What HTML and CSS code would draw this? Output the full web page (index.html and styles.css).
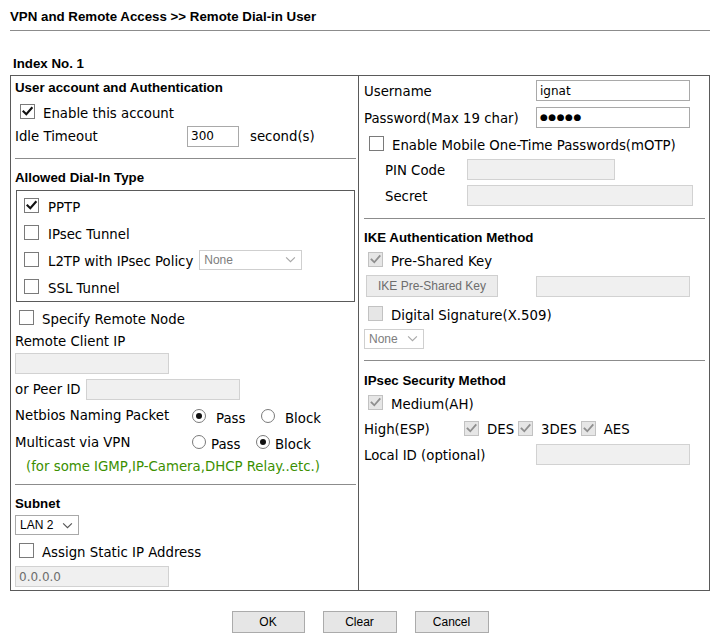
FILE: index.html
```html
<!DOCTYPE html>
<html>
<head>
<meta charset="utf-8">
<link rel="stylesheet" href="styles.css">
</head>
<body>
<div class="page">
  <div class="title">VPN and Remote Access &gt;&gt; Remote Dial-in User</div>
  <div class="rule"></div>
  <div class="index">Index No. 1</div>

  <div class="table">
    <div class="col left">
      <div class="head h22">User account and Authentication</div>
      <div class="row h27"><span class="cb on m5"><svg viewBox="0 0 13 13"><path d="M2.5 6.5l2.8 2.8 5.4-6.3"/></svg></span><span class="cbl">Enable this account</span></div>
      <div class="row h22"><span class="lab w172">Idle Timeout</span><span class="inp w52">300</span><span class="after">second(s)</span></div>
      <div class="sep s21"></div>
      <div class="head h18">Allowed Dial-In Type</div>
      <div class="dialbox">
        <div class="row h27"><span class="cb on m7"><svg viewBox="0 0 13 13"><path d="M2.5 6.5l2.8 2.8 5.4-6.3"/></svg></span><span class="cbl g9">PPTP</span></div>
        <div class="row h27"><span class="cb m7"></span><span class="cbl g9">IPsec Tunnel</span></div>
        <div class="row h27"><span class="cb m7"></span><span class="cbl g9">L2TP with IPsec Policy</span><span class="sel dis w103"><span>None</span><svg class="chev" viewBox="0 0 12 8"><path d="M1 1.5l5 5 5-5"/></svg></span></div>
        <div class="row h27"><span class="cb m7"></span><span class="cbl g9">SSL Tunnel</span></div>
      </div>
      <div class="row h30"><span class="cb m4"></span><span class="cbl">Specify Remote Node</span></div>
      <div class="row h18"><span class="lab">Remote Client IP</span></div>
      <div class="row h27 top3"><span class="inp dis w154"></span></div>
      <div class="row h25"><span class="lab w71">or Peer ID</span><span class="inp dis w154"></span></div>
      <div class="row h27"><span class="lab w177">Netbios Naming Packet</span><span class="pair w69"><span class="rd on"></span><span class="rl g10 low">Pass</span></span><span class="pair"><span class="rd"></span><span class="rl g10 low">Block</span></span></div>
      <div class="row h26"><span class="lab w177">Multicast via VPN</span><span class="pair w64"><span class="rd"></span><span class="rl g5 low">Pass</span></span><span class="pair"><span class="rd on"></span><span class="rl g5 low">Block</span></span></div>
      <div class="row h22"><span class="note">(for some IGMP,IP-Camera,DHCP Relay..etc.)</span></div>
      <div class="sep s16"></div>
      <div class="head h20">Subnet</div>
      <div class="row h24"><span class="sel w64"><span>LAN 2</span><svg class="chev dark" viewBox="0 0 12 8"><path d="M1 1.5l5 5 5-5"/></svg></span></div>
      <div class="row h27"><span class="cb m4"></span><span class="cbl">Assign Static IP Address</span></div>
      <div class="row h25"><span class="inp dis w154 grey">0.0.0.0</span></div>
    </div>

    <div class="col right">
      <div class="row h27"><span class="lab w172 lo">Username</span><span class="inp w154">ignat</span></div>
      <div class="row h26"><span class="lab w172 lo">Password(Max 19 char)</span><span class="inp w154 dots">●●●●●</span></div>
      <div class="row h26"><span class="cb m5"></span><span class="cbl">Enable Mobile One-Time Passwords(mOTP)</span></div>
      <div class="row h27"><span class="lab w82 m21 lo">PIN Code</span><span class="inp dis w148"></span></div>
      <div class="row h24"><span class="lab w82 m21 lo">Secret</span><span class="inp dis w226"></span></div>
      <div class="sep s21"></div>
      <div class="head h18">IKE Authentication Method</div>
      <div class="row h26"><span class="cb on dis m4"><svg viewBox="0 0 13 13"><path d="M2.5 6.5l2.8 2.8 5.4-6.3"/></svg></span><span class="cbl">Pre-Shared Key</span></div>
      <div class="row h28"><span class="btn dis w132 m2">IKE Pre-Shared Key</span><span class="inp dis w154 g38"></span></div>
      <div class="row h26"><span class="cb dis m4"></span><span class="cbl">Digital Signature(X.509)</span></div>
      <div class="row h25"><span class="sel dis w60"><span>None</span><svg class="chev" viewBox="0 0 12 8"><path d="M1 1.5l5 5 5-5"/></svg></span></div>
      <div class="sep s20"></div>
      <div class="head h18">IPsec Security Method</div>
      <div class="row h26"><span class="cb on dis m4"><svg viewBox="0 0 13 13"><path d="M2.5 6.5l2.8 2.8 5.4-6.3"/></svg></span><span class="cbl">Medium(AH)</span></div>
      <div class="row h26"><span class="lab w100 lo">High(ESP)</span><span class="cb on dis"><svg viewBox="0 0 13 13"><path d="M2.5 6.5l2.8 2.8 5.4-6.3"/></svg></span><span class="opt">DES</span><span class="cb on dis"><svg viewBox="0 0 13 13"><path d="M2.5 6.5l2.8 2.8 5.4-6.3"/></svg></span><span class="opt">3DES</span><span class="cb on dis"><svg viewBox="0 0 13 13"><path d="M2.5 6.5l2.8 2.8 5.4-6.3"/></svg></span><span class="opt">AES</span></div>
      <div class="row h27"><span class="lab w172 lo">Local ID (optional)</span><span class="inp dis w154"></span></div>
    </div>
  </div>

  <div class="buttons">
    <span class="btn w73">OK</span>
    <span class="btn w74">Clear</span>
    <span class="btn w74">Cancel</span>
  </div>
</div>
</body>
</html>
```

FILE: styles.css
```css
html, body { margin: 0; padding: 0; background: #fff; }
body {
  font-family: "DejaVu Sans", Verdana, sans-serif;
  font-size: 13.3px;
  color: #000;
}
.page { padding-left: 10px; width: 700px; }

.title {
  font-family: "Liberation Sans", Arial, sans-serif;
  font-weight: bold;
  font-size: 13.3px;
  line-height: 16px;
  padding-top: 9px;
}
.rule { margin-top: 5px; height: 1px; background: #8c8c8c; }
.index {
  font-family: "Liberation Sans", Arial, sans-serif;
  font-weight: bold;
  font-size: 13.3px;
  line-height: 16px;
  margin-top: 25px;
  margin-bottom: 3px;
  padding-left: 3px;
}

.table {
  display: flex;
  border: 1px solid #5a5a5a;
  width: 698px;
}
.col { display: flex; flex-direction: column; }
.left {
  width: 341px;
  padding: 0 2px 1px 4px;
  border-right: 1px solid #5a5a5a;
}
.right {
  width: 345px;
  padding: 1px 0 0 5px;
}

.head {
  font-family: "Liberation Sans", Arial, sans-serif;
  font-weight: bold;
  font-size: 13.3px;
  display: flex;
  align-items: center;
}
.row { display: flex; align-items: center; white-space: nowrap; }
.top3 { align-items: flex-start; padding-top: 3px; box-sizing: border-box; }

.h18 { height: 18px; } .h20 { height: 20px; } .h22 { height: 22px; }
.h24 { height: 24px; } .h25 { height: 25px; } .h26 { height: 26px; }
.h27 { height: 27px; } .h28 { height: 28px; } .h30 { height: 30px; }

.sep { border-top: 1px solid #8c8c8c; box-sizing: border-box; }
.s21 { margin-top: 11px; height: 10px; }
.s20 { margin-top: 9px; height: 11px; }
.s16 { margin-top: 7px; height: 9px; }
.right .sep { margin-right: 4px; }

.lab { display: inline-block; }
.lo { padding-top: 2px; }
.w71 { width: 71px; } .w82 { width: 82px; } .w100 { width: 100px; }
.w172 { width: 172px; } .w177 { width: 177px; }
.m2 { margin-left: 2px; } .m4 { margin-left: 4px; } .m5 { margin-left: 5px; }
.m7 { margin-left: 7px; } .m21 { margin-left: 21px; }

/* checkboxes */
.cb {
  display: inline-flex;
  width: 13px; height: 13px;
  border: 1px solid #7a7a7a;
  background: #fff;
  flex: none;
}
.cb svg { width: 13px; height: 13px; }
.cb path { fill: none; stroke: #111; stroke-width: 2.1; stroke-linecap: square; }
.cb.dis { border-color: #c2c2c2; background: #e6e6e6; }
.cb.dis path { stroke: #8f8f8f; stroke-width: 1.8; }
.cbl { margin-left: 8px; padding-top: 4px; }
.g9 { margin-left: 9px; }
.opt { margin-left: 8px; margin-right: 4px; padding-top: 3px; }

/* radios */
.pair { display: inline-flex; align-items: center; }
.w69 { width: 69px; } .w64 { width: 64px; }
.rd {
  width: 12px; height: 12px;
  border: 1px solid #7a7a7a;
  border-radius: 50%;
  background: #fff;
  display: inline-flex;
  align-items: center;
  justify-content: center;
  flex: none;
}
.rd.on::after {
  content: "";
  width: 6px; height: 6px;
  border-radius: 50%;
  background: #111;
}
.g10 { margin-left: 10px; } .g5 { margin-left: 5px; }
.low { padding-top: 5px; }

/* inputs */
.inp {
  display: inline-flex;
  align-items: center;
  box-sizing: border-box;
  height: 21px;
  border: 1px solid #a9a9a9;
  background: #fff;
  padding: 0 3px;
  font-family: "DejaVu Sans", Verdana, sans-serif;
  font-size: 12px;
  flex: none;
}
.inp.dis { background: #f0f0f0; border-color: #d2d2d2; }
.inp.grey { color: #6d6d6d; }
.dots { font-size: 9px; letter-spacing: 0.5px; }
.w52 { width: 52px; } .w148 { width: 148px; } .w154 { width: 154px; } .w226 { width: 226px; }
.g38 { margin-left: 38px; }
.after { margin-left: 11px; }

/* selects */
.sel {
  display: inline-flex;
  align-items: center;
  justify-content: space-between;
  box-sizing: border-box;
  height: 20px;
  border: 1px solid #a9a9a9;
  background: #fff;
  padding: 0 5px 0 4px;
  font-family: "Liberation Sans", Arial, sans-serif;
  font-size: 12px;
  color: #000;
  flex: none;
}
.sel.dis { color: #7d7d7d; border-color: #cfcfcf; }
.left .sel.dis { margin-left: 6px; }
.w103 { width: 103px; } .w64.sel { width: 64px; } .w60 { width: 60px; }
.chev { width: 11px; height: 7px; }
.chev path { fill: none; stroke: #a8a8a8; stroke-width: 1.3; }
.chev.dark path { stroke: #555; }

.note { color: #3b8f00; margin-left: 11px; }

.dialbox {
  margin: 4px 1px 0 1px;
  border: 1px solid #5a5a5a;
  padding: 1px 0;
}

/* buttons */
.btn {
  display: inline-flex;
  align-items: center;
  justify-content: center;
  box-sizing: border-box;
  height: 22px;
  background: #e6e6e6;
  border: 1px solid #ababab;
  font-family: "Liberation Sans", Arial, sans-serif;
  font-size: 12px;
  color: #000;
  flex: none;
}
.btn.dis { color: #6d6d6d; border-color: #cfcfcf; background: #ececec; }
.w132 { width: 132px; } .w73 { width: 73px; } .w74 { width: 74px; }

.buttons {
  display: flex;
  justify-content: center;
  gap: 18px;
  margin-top: 20px;
}
```
